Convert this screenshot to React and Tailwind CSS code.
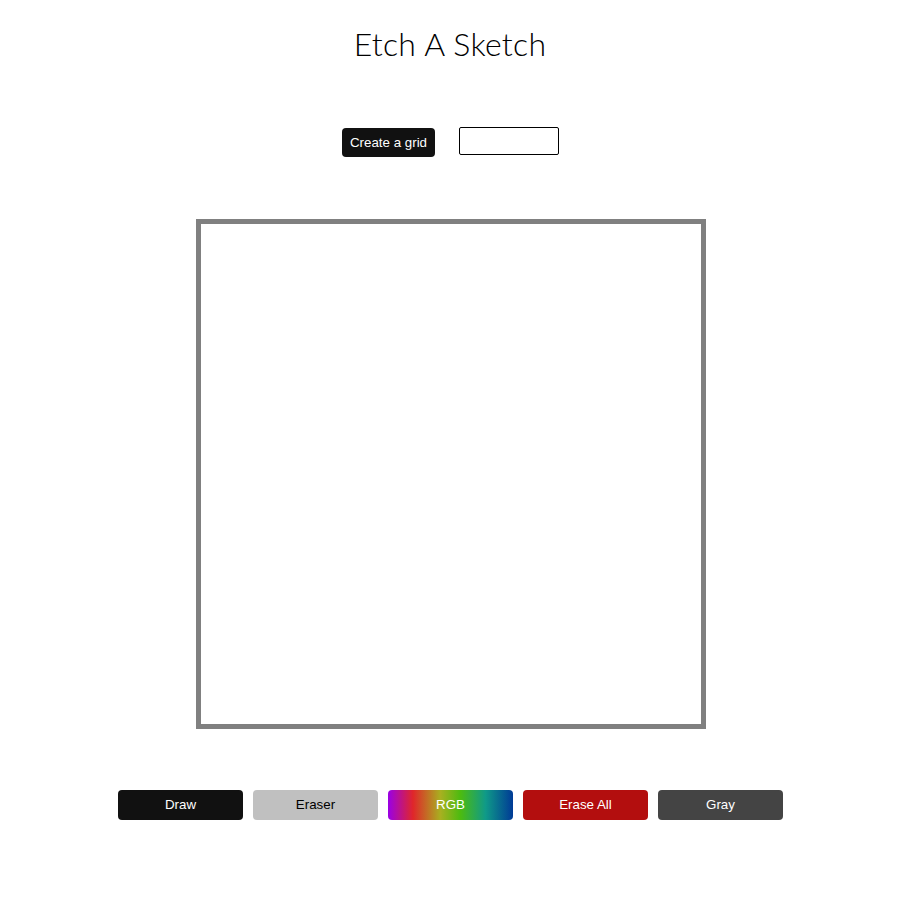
import React from 'react';

const btn = 'w-[125px] h-[30px] rounded-[4px] text-[13.333px] font-["Liberation_Sans",Arial,sans-serif]';

export default function App() {
  return (
    <div className="min-h-screen bg-white flex flex-col items-center">
      {/* Title */}
      <h1 className='mt-[24px] text-[32px] leading-[40px] text-black font-["Lato","Open_Sans",sans-serif] font-light tracking-[0.3px]'>
        Etch A Sketch
      </h1>

      {/* Grid size controls */}
      <div className="mt-[63px] flex items-start gap-[24px] ml-[1px]">
        <button className='mt-[1px] w-[93px] h-[29px] rounded-[4px] bg-[#111111] text-white text-[13.333px] font-["Liberation_Sans",Arial,sans-serif]'>
          Create a grid
        </button>
        <input className="w-[100px] h-[28px] border border-black rounded-[2px] px-1 text-[13px]" />
      </div>

      {/* Sketch board */}
      <div className="mt-[62px] w-[510px] h-[510px] border-[5px] border-[#808080] bg-white ml-[2px]" />

      {/* Mode buttons */}
      <div className="mt-[61px] flex gap-[10px] ml-[1px]">
        <button className={`${btn} bg-[#111111] text-white`}>Draw</button>
        <button className={`${btn} bg-[#c0c0c0] text-black`}>Eraser</button>
        <button className={`${btn} text-white bg-[linear-gradient(to_right,#9a00e6_0%,#e0262a_20%,#a8b020_42%,#4cbb10_58%,#0f9a88_78%,#003a96_100%)]`}>RGB</button>
        <button className={`${btn} bg-[#b30e0e] text-white`}>Erase All</button>
        <button className={`${btn} bg-[#444444] text-white`}>Gray</button>
      </div>
    </div>
  );
}
